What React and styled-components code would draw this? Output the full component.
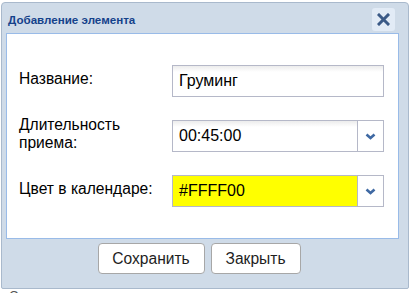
import styled, { createGlobalStyle } from "styled-components";

const GlobalStyle = createGlobalStyle`
    html, body {
        margin: 0;
        padding: 0;
        background: #ffffff;
        font-family: "Liberation Sans", Arial, sans-serif;
    }
`;

const Screen = styled.div`
    width: 410px;
    height: 293px;
    overflow: hidden;
    padding: 2px 0 0 1px;
    box-sizing: border-box;
`;

const Window = styled.div`
    width: 408px;
    height: 287px;
    box-sizing: border-box;
    border: 1px solid #a9b9cc;
    border-radius: 4px 4px 2px 2px;
    background: #cfdbe8;
    display: flex;
    flex-direction: column;
    padding: 0 9px 0 4px;
`;

const TitleBar = styled.div`
    height: 30px;
    display: flex;
    align-items: center;
    justify-content: space-between;
    padding: 0 4px 0 2px;
`;

const Title = styled.div`
    font-size: 11.6px;
    font-weight: bold;
    color: #15428b;
    margin-top: 3px;
`;

const CloseButton = styled.button`
    width: 23px;
    height: 23px;
    border: none;
    border-radius: 3px;
    background: #e2ebf6;
    display: flex;
    align-items: center;
    justify-content: center;
    padding: 0;
    margin-top: 3px;
`;

const Panel = styled.div`
    height: 206px;
    box-sizing: border-box;
    border: 1px solid #99bbe8;
    background: #ffffff;
    padding: 31px 13px 0 12px;
    display: flex;
    flex-direction: column;
    gap: 19px;
`;

const Row = styled.div`
    display: flex;
    align-items: center;
`;

const Label = styled.div`
    width: 153px;
    font-size: 15.6px;
    line-height: 18px;
    color: #000000;
    padding-bottom: 4px;
`;

const Field = styled.div`
    width: 212px;
    height: 32px;
    box-sizing: border-box;
    border: 1px solid #b5b8c8;
    display: flex;
    background: #ffffff;
`;

const FieldText = styled.div`
    flex: 1;
    display: flex;
    align-items: center;
    padding-left: 6px;
    font-size: 16px;
    color: #000000;
    background: ${(p) =>
        p.$fill
            ? p.$fill
            : "linear-gradient(to bottom, #ececec 0px, #ffffff 6px)"};
`;

const Trigger = styled.div`
    width: 25px;
    border-left: 1px solid #b5b8c8;
    display: flex;
    align-items: center;
    justify-content: center;
    background: #ffffff;
`;

const Footer = styled.div`
    flex: 1;
    display: flex;
    justify-content: center;
    align-items: flex-start;
    gap: 6px;
    padding: 4px 7px 0 0;
`;

const Button = styled.button`
    width: ${(p) => p.$width}px;
    height: 31px;
    border: 1px solid #a7a7a7;
    border-radius: 4px;
    background: #ffffff;
    font-family: "Liberation Sans", Arial, sans-serif;
    font-size: 15.6px;
    color: #1e1e1e;
    padding: 0;
`;

const PageStrip = styled.div`
    height: 6px;
    overflow: hidden;
    padding-left: 8px;
    font-size: 13px;
    line-height: 13px;
    color: #555555;
`;

const Chevron = () => (
    <svg width="11" height="7" viewBox="0 0 11 7">
        <path
            d="M1.5 1.5 L5.5 5 L9.5 1.5"
            fill="none"
            stroke="#3f69a3"
            strokeWidth="2.6"
        />
    </svg>
);

const CloseIcon = () => (
    <svg width="13" height="13" viewBox="0 0 13 13">
        <path
            d="M2 2 L11 11 M11 2 L2 11"
            stroke="#3b5a87"
            strokeWidth="3"
            strokeLinecap="square"
        />
    </svg>
);

function ComboField({ value, fill }) {
    return (
        <Field>
            <FieldText $fill={fill}>{value}</FieldText>
            <Trigger>
                <Chevron />
            </Trigger>
        </Field>
    );
}

export default function App() {
    return (
        <Screen>
            <GlobalStyle />
            <Window>
                <TitleBar>
                    <Title>Добавление элемента</Title>
                    <CloseButton>
                        <CloseIcon />
                    </CloseButton>
                </TitleBar>
                <Panel>
                    <Row>
                        <Label>Название:</Label>
                        <Field>
                            <FieldText>Груминг</FieldText>
                        </Field>
                    </Row>
                    <Row>
                        <Label>
                            Длительность
                            <br />
                            приема:
                        </Label>
                        <ComboField value="00:45:00" />
                    </Row>
                    <Row>
                        <Label>Цвет в календаре:</Label>
                        <ComboField value="#FFFF00" fill="#ffff00" />
                    </Row>
                </Panel>
                <Footer>
                    <Button $width={107}>Сохранить</Button>
                    <Button $width={90}>Закрыть</Button>
                </Footer>
            </Window>
            <PageStrip>Стоматология</PageStrip>
        </Screen>
    );
}
